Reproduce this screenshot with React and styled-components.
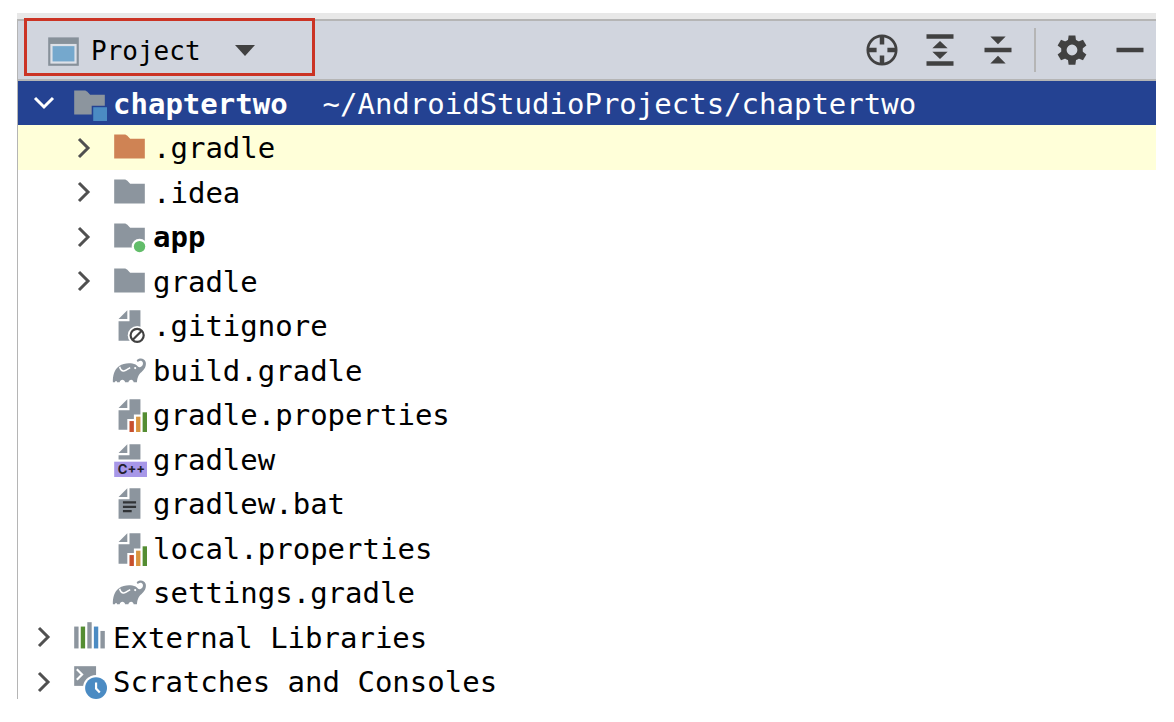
import React, { useState } from "react";
import styled, { createGlobalStyle } from "styled-components";

const GlobalStyle = createGlobalStyle`
  * {
    box-sizing: border-box;
  }
  body {
    margin: 0;
    background: #fff;
    font-family: "DejaVu Sans Mono", monospace;
    color: #000;
  }
  button {
    border: 0;
    padding: 0;
    background: none;
    color: inherit;
    font: inherit;
    cursor: pointer;
  }
  svg {
    display: block;
  }
`;

const Page = styled.main`
  height: 100vh;
  padding: 13px 18px 23px 17px;
`;

const Panel = styled.section`
  height: 100%;
  display: flex;
  flex-direction: column;
  border-top: 6px solid #e8e8e8;
`;

const Header = styled.header`
  position: relative;
  flex: none;
  height: 62px;
  display: flex;
  align-items: center;
  justify-content: space-between;
  padding: 0 8px 0 28px;
  background: #d1d5de;
  border: solid #b5b5b5;
  border-width: 2px 0 2px 1px;
`;

const Highlight = styled.div`
  position: absolute;
  left: 6px;
  top: -3px;
  width: 291px;
  height: 58px;
  border: 3px solid #cb3324;
  pointer-events: none;
`;

const ViewButton = styled.button`
  display: flex;
  align-items: center;
  font-size: 26px;
`;

const ViewName = styled.span`
  padding: 2px 34px 0 10px;
`;

const Tools = styled.div`
  display: flex;
  align-items: center;
  gap: 22px;
  color: #414141;
`;

const Divider = styled.span`
  width: 2px;
  height: 44px;
  margin: 0 -4px;
  background: #b5b5b5;
`;

const Tree = styled.ul`
  flex: 1;
  min-height: 0;
  margin: 0;
  padding: 0;
  display: grid;
  grid-auto-rows: 44px 45px;
  overflow: hidden;
  list-style: none;
  border-left: 1px solid #b5b5b5;
`;

const Row = styled.li`
  display: flex;
  align-items: center;
  padding-left: ${(props) => 8 + props.$level * 40}px;
  font-size: 29px;
  white-space: pre;
  color: ${(props) => (props.$selected ? "#fff" : "#000")};
  background: ${(props) =>
    props.$selected ? "#244292" : props.$excluded ? "#ffffd9" : "none"};
`;

const Toggle = styled.button`
  flex: none;
  width: 36px;
  height: 36px;
  margin-right: 10px;
  color: ${(props) => (props.$selected ? "#fff" : "#505050")};
`;

const NoToggle = styled.span`
  flex: none;
  width: 46px;
`;

const Label = styled.span`
  padding: 1px 0 0 6px;
`;

const Name = styled.span`
  font-weight: ${(props) => (props.$bold ? 700 : 400)};
`;

const GREY = "#8c959e";

const Icon = ({ children }) => (
  <svg width="35" height="35" viewBox="0 0 16 16" fill={GREY} aria-hidden="true">
    {children}
  </svg>
);

const folderPath = "M1 2h4.6c.6 0 .9.2 1.3.5L8.3 4H15v9H1z";

const FolderIcon = ({ color }) => (
  <Icon>
    <path d={folderPath} fill={color} />
  </Icon>
);

const RootIcon = () => (
  <Icon>
    <path d="M1 2h4.6c.6 0 .9.2 1.3.5L8.3 4H15v5H9v4H1z" />
    <rect x="9.7" y="9.7" width="6.3" height="6.3" fill="#4b8bc3" />
  </Icon>
);

const AppIcon = () => (
  <Icon>
    <path d={folderPath} />
    <circle cx="12.6" cy="12.6" r="3.6" fill="#fff" />
    <circle cx="12.6" cy="12.6" r="2.6" fill="#62bd6a" />
  </Icon>
);

const Doc = ({ bottom = 15 }) => (
  <>
    <path d="M7 1 3 5h4z" />
    <path d={`M8 1v5H3V${bottom}H13V1z`} />
  </>
);

const IgnoreIcon = () => (
  <Icon>
    <Doc />
    <circle cx="11.5" cy="12.5" r="4.3" fill="#fff" />
    <g fill="none" stroke="#414141" strokeWidth="1">
      <circle cx="11.5" cy="12.5" r="3" />
      <path d="m9.4 14.6 4.2-4.2" />
    </g>
  </Icon>
);

const GradleIcon = () => (
  <Icon>
    <path d="M.4 13.400C.3 10.400 1 7.500 3.300 5.900 5.300 4.600 8.600 4.300 10.800 5.300c.7.500 1.300 1.400 2 1.200.9-.3 1.600-1.300 1.300-2.200-.3-.8-1.300-1-2-.4-.5.400-1.100-.3-.6-.8C12.700 2 14.900 2.300 15.400 4.100c.5 2-.8 3.600-2 4.700-1.200 1-1.800 2.200-2 4.600H9.900c-.1-1.600-2.200-1.600-2.400 0H6c-.2-1.600-2.300-1.600-2.500 0H2.300c-.1-.8-.8-.8-1 0z" />
    <path d="M3.500 6.300c.3 1.200.9 2 1.900 1.900 1-.1 1.900-.9 2.900-1.500" fill="none" stroke="#fff" strokeWidth=".7" />
    <circle cx="10.6" cy="6.900" r=".5" fill="#fff" />
  </Icon>
);

const PropertiesIcon = () => (
  <Icon>
    <path d="M7 1 3 5h4z" />
    <path d="M8 1v5H3v9h4v-5h3V8h3V1z" />
    <rect x="8" y="11" width="2" height="5" fill="#c8502d" />
    <rect x="11" y="9" width="2" height="7" fill="#d9953f" />
    <rect x="14" y="7" width="2" height="9" fill="#548d32" />
  </Icon>
);

const CppIcon = () => (
  <Icon>
    <Doc bottom={8} />
    <rect x="1" y="9" width="15" height="7" fill="#a797e8" />
    <text
      x="2.6"
      y="14.7"
      fontFamily="Inter, sans-serif"
      fontWeight="700"
      fontSize="6"
      fill="#231f2e"
    >
      C++
    </text>
  </Icon>
);

const TextIcon = () => (
  <Icon>
    <Doc />
    <path d="M5 7.5h6M5 9.5h6M5 11.5h4" stroke="#303336" strokeWidth="1" />
  </Icon>
);

const LibrariesIcon = () => (
  <Icon>
    <rect x="1" y="3" width="2" height="10" />
    <rect x="4" y="3" width="2" height="10" fill="#548d32" />
    <rect x="7" y="1" width="2" height="12" />
    <rect x="10" y="3" width="2" height="10" fill="#4b8bc3" />
    <rect x="13" y="5" width="2" height="8" />
  </Icon>
);

const ScratchesIcon = () => (
  <Icon>
    <rect x="1" y="1" width="10" height="9" />
    <path d="m2.2 2.4 2.4 2.4-2.4 2.4" fill="none" stroke="#fff" strokeWidth="1" />
    <circle cx="11" cy="11" r="6" fill="#fff" />
    <circle cx="11" cy="11" r="5" fill="#4b8bc3" />
    <path d="M11 8.5v2.7l1.7 1.8" fill="none" stroke="#fff" strokeWidth="1" />
  </Icon>
);

const Chevron = ({ open }) => (
  <svg width="36" height="36" viewBox="0 0 36 36" aria-hidden="true">
    <path
      d={open ? "M9 13l9 9 9-9" : "M13 9l9 9-9 9"}
      fill="none"
      stroke="currentColor"
      strokeWidth="3"
    />
  </svg>
);

const ToolIcon = ({ children }) => (
  <svg width="36" height="36" viewBox="0 0 16 16" fill="currentColor" aria-hidden="true">
    {children}
  </svg>
);

const LocateIcon = () => (
  <ToolIcon>
    <circle cx="8" cy="8" r="6.3" fill="none" stroke="currentColor" strokeWidth="1.2" />
    <path d="M7 2h2v3.6H7zM7 10.4h2V14H7zM2 7h3.6v2H2zM10.4 7H14v2h-3.6z" />
  </ToolIcon>
);

const ExpandIcon = () => (
  <ToolIcon>
    <path d="M2 1h12v2H2zM2 13h12v2H2zM8 4l3.4 3.2H4.6zM8 12l3.4-3.2H4.6z" />
  </ToolIcon>
);

const CollapseIcon = () => (
  <ToolIcon>
    <path d="M2 7h12v2H2zM4.6 2h6.8L8 5.4zM4.6 14h6.8L8 10.6z" />
  </ToolIcon>
);

const teeth = [0, 60, 120, 180, 240, 300];

const GearIcon = () => (
  <ToolIcon>
    {teeth.map((angle) => (
      <path key={angle} d="M6.5 1.5h3l.4 3H6.1z" transform={`rotate(${angle} 8 8)`} />
    ))}
    <circle cx="8" cy="8" r="3.6" fill="none" stroke="currentColor" strokeWidth="2.4" />
  </ToolIcon>
);

const HideIcon = () => (
  <ToolIcon>
    <path d="M2 7h12v2H2z" />
  </ToolIcon>
);

const ProjectIcon = () => (
  <Icon>
    <path d="M1 2h14v13H1z" fill="#87919a" />
    <path d="M2 5h12v9H2z" fill="#dde1e8" />
    <path d="M3 6h10v7H3z" fill="#75a8cd" />
  </Icon>
);

const rows = [
  { name: "chaptertwo", path: "  ~/AndroidStudioProjects/chaptertwo", level: 0, icon: <RootIcon />, dir: true, open: true, bold: true, selected: true },
  { name: ".gradle", level: 1, icon: <FolderIcon color="#cf8354" />, dir: true, excluded: true },
  { name: ".idea", level: 1, icon: <FolderIcon />, dir: true },
  { name: "app", level: 1, icon: <AppIcon />, dir: true, bold: true },
  { name: "gradle", level: 1, icon: <FolderIcon />, dir: true },
  { name: ".gitignore", level: 1, icon: <IgnoreIcon /> },
  { name: "build.gradle", level: 1, icon: <GradleIcon /> },
  { name: "gradle.properties", level: 1, icon: <PropertiesIcon /> },
  { name: "gradlew", level: 1, icon: <CppIcon /> },
  { name: "gradlew.bat", level: 1, icon: <TextIcon /> },
  { name: "local.properties", level: 1, icon: <PropertiesIcon /> },
  { name: "settings.gradle", level: 1, icon: <GradleIcon /> },
  { name: "External Libraries", level: 0, icon: <LibrariesIcon />, dir: true },
  { name: "Scratches and Consoles", level: 0, icon: <ScratchesIcon />, dir: true },
];

const App = () => {
  const [open, setOpen] = useState(true);
  const visible = rows.filter((row) => open || row.level === 0);

  return (
    <Page>
      <GlobalStyle />
      <Panel>
        <Header>
          <ViewButton>
            <ProjectIcon />
            <ViewName>Project</ViewName>
            <svg width="20" height="12" viewBox="0 0 20 12" aria-hidden="true">
              <path d="M0 1h20L10 12z" fill="#414141" />
            </svg>
          </ViewButton>
          <Tools>
            <button aria-label="Select opened file"><LocateIcon /></button>
            <button aria-label="Expand all"><ExpandIcon /></button>
            <button aria-label="Collapse all"><CollapseIcon /></button>
            <Divider />
            <button aria-label="Options"><GearIcon /></button>
            <button aria-label="Hide"><HideIcon /></button>
          </Tools>
          <Highlight />
        </Header>
        <Tree>
          {visible.map((row) => (
            <Row key={row.name} $level={row.level} $selected={row.selected} $excluded={row.excluded}>
              {row.dir ? (
                <Toggle
                  aria-label={`Toggle ${row.name}`}
                  $selected={row.selected}
                  onClick={() => row.selected && setOpen(!open)}
                >
                  <Chevron open={row.open && open} />
                </Toggle>
              ) : (
                <NoToggle />
              )}
              {row.icon}
              <Label>
                <Name $bold={row.bold}>{row.name}</Name>
                {row.path}
              </Label>
            </Row>
          ))}
        </Tree>
      </Panel>
    </Page>
  );
};

export default App;
